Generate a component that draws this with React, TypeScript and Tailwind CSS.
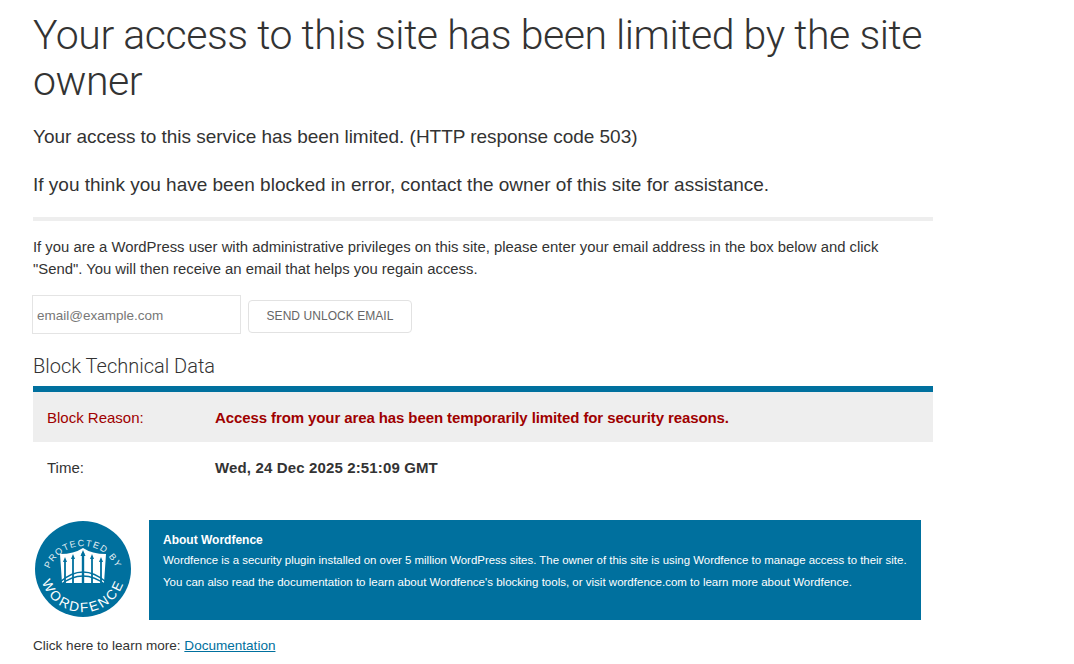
const sans = "font-['Liberation_Sans',Arial,sans-serif]";

function Logo() {
  return (
    <svg width="98" height="98" viewBox="0 0 98 98" className="block">
      <circle cx="49" cy="49" r="48" fill="#00709e" />
      <defs>
        <path id="topArc" d="M13 62 A35 35 0 1 1 85 62" />
        <path id="bottomArc" d="M6 49 A43 43 0 0 0 92 49" />
      </defs>
      <text fill="#fff" fontSize="9" letterSpacing="1.3" fontFamily="Liberation Sans, sans-serif" opacity="0.9">
        <textPath href="#topArc" startOffset="50%" textAnchor="middle">PROTECTED BY</textPath>
      </text>
      <text fill="#fff" fontSize="13.5" letterSpacing="2.2" fontFamily="Liberation Sans, sans-serif">
        <textPath href="#bottomArc" startOffset="50%" textAnchor="middle">WORDFENCE</textPath>
      </text>
      <path d="M26 34 Q40 34 49 28 Q58 34 72 34 L70 63 H28 Z" fill="#fff" />
      <g stroke="#00709e" fill="none">
        <path d="M31 41 V64 M39 38 V64 M58 38 V64 M67 41 V64" strokeWidth="1.8" />
        <path d="M49 33 V72" strokeWidth="2.4" />
        <path d="M26 62 Q49 42 72 62" strokeWidth="1.5" />
        <path d="M26 65 Q49 47 72 65" strokeWidth="1.5" />
      </g>
      <path d="M49 30 L51.5 36 H46.5 Z M31 37 L33 42 H29 Z M39 34 L41 39 H37 Z M58 34 L60 39 H56 Z M67 37 L69 42 H65 Z M46 64 L49 78 L52 64 Z" fill="#00709e" />
    </svg>
  );
}

export default function App() {
  return (
    <div className={`${sans} bg-white min-h-[664px] pl-[33px] text-[#333] overflow-hidden`}>
      <div className="w-[900px]">
        <h1 className="text-[41px] leading-[46px] font-light font-['Roboto',sans-serif] tracking-[-0.45px] pt-[12px] text-[#333]">
          Your access to this site has been limited by the site owner
        </h1>

        <p className="text-[19px] leading-[26px] mt-[20px] tracking-[-0.04px]">Your access to this service has been limited. (HTTP response code 503)</p>
        <p className="text-[19px] leading-[26px] mt-[21.5px]">If you think you have been blocked in error, contact the owner of this site for assistance.</p>

        <div className="h-[4px] bg-[#eeeeee] mt-[19.5px]" />

        <p className="text-[14.85px] leading-[22px] mt-[15px] w-[860px]">
          If you are a WordPress user with administrative privileges on this site, please enter your email address in the box below and click "Send". You will then receive an email that helps you regain access.
        </p>

        <div className="flex items-start gap-[7px] mt-[15px] -ml-px">
          <input
            placeholder="email@example.com"
            className="w-[209px] h-[39px] border border-[#e4e4e4] px-[4px] pt-[2px] text-[13.5px] bg-white placeholder:text-[#777] outline-none"
          />
          <button className="w-[164px] h-[33px] mt-[5px] pb-[2px] border border-[#e2e2e2] rounded-[4px] text-[12px] tracking-[0.05px] text-[#666] bg-white">
            SEND UNLOCK EMAIL
          </button>
        </div>

        <h2 className="text-[20px] leading-[26px] font-light font-['Roboto',sans-serif] mt-[19px] text-[#333]">Block Technical Data</h2>

        <div className="border-t-[6px] border-[#00709e] mt-[7px]">
          <div className="flex items-center h-[50px] pt-[2px] bg-[#eeeeee] text-[15px] text-[#9f0000]">
            <div className="w-[182px] pl-[14px]">Block Reason:</div>
            <div className="font-bold tracking-[-0.1px]">Access from your area has been temporarily limited for security reasons.</div>
          </div>
          <div className="flex items-center h-[50px] pt-[2px] text-[15px]">
            <div className="w-[182px] pl-[14px]">Time:</div>
            <div className="font-bold tracking-[0.14px]">Wed, 24 Dec 2025 2:51:09 GMT</div>
          </div>
        </div>

        <div className="flex items-start mt-[28px] w-[888px]">
          <div className="w-[116px] shrink-0 pl-px">
            <Logo />
          </div>
          <div className="flex-1 h-[100px] bg-[#00709e] text-white pl-[14px] pt-[13px]">
            <div className="text-[12px] leading-[15px] font-bold">About Wordfence</div>
            <p className="text-[11.45px] leading-[15px] mt-[5px]">Wordfence is a security plugin installed on over 5 million WordPress sites. The owner of this site is using Wordfence to manage access to their site.</p>
            <p className="text-[11.53px] leading-[15px] mt-[7px]">You can also read the documentation to learn about Wordfence's blocking tools, or visit wordfence.com to learn more about Wordfence.</p>
          </div>
        </div>

        <p className="text-[13.55px] leading-[18px] mt-[17px]">
          Click here to learn more: <a href="#" className="text-[#00709e] underline">Documentation</a>
        </p>
      </div>
    </div>
  );
}
